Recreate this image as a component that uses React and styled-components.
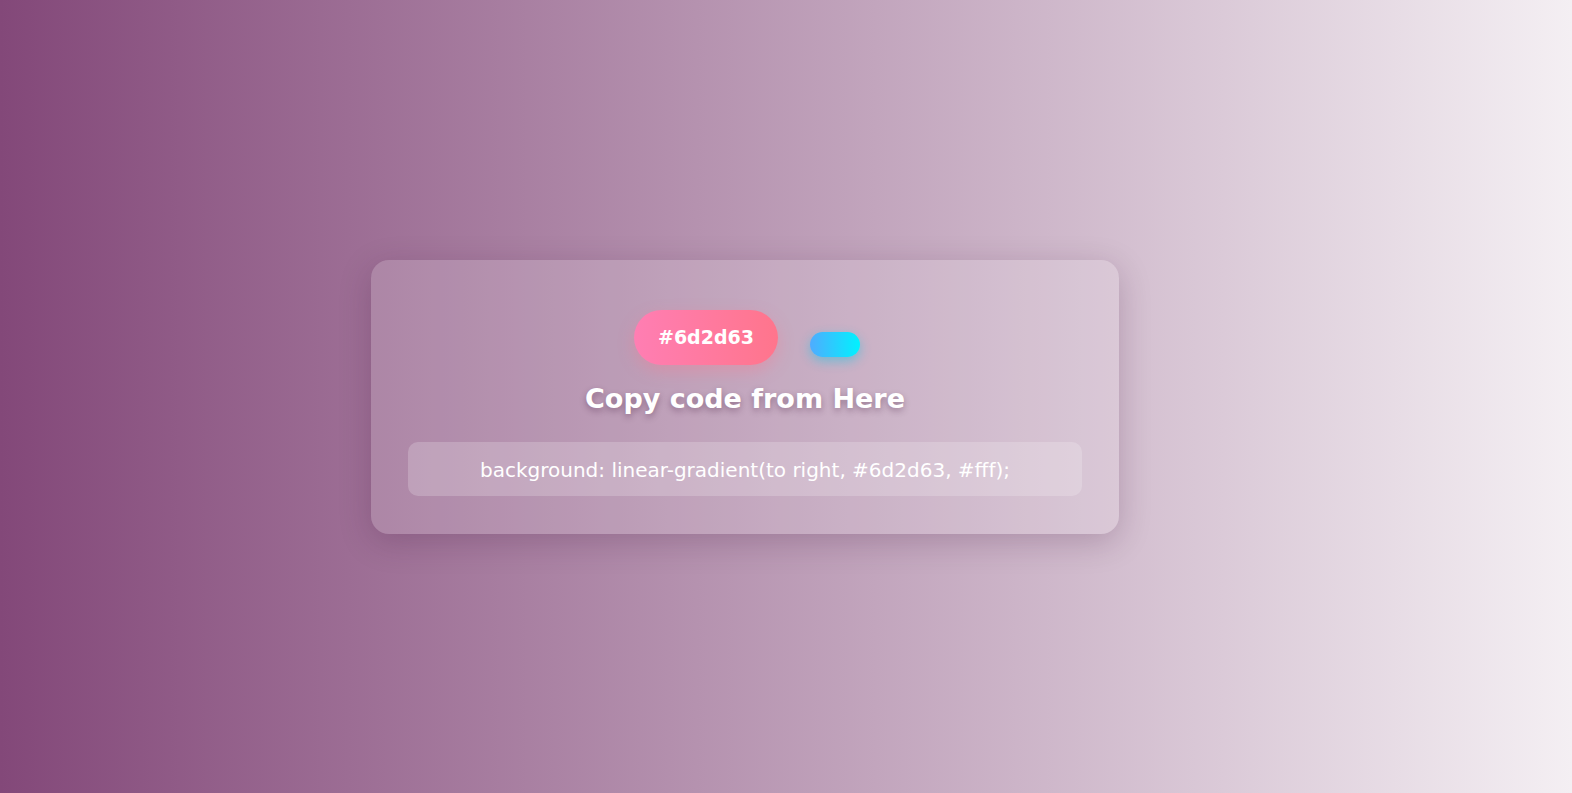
import styled, { createGlobalStyle } from 'styled-components'

const GlobalStyle = createGlobalStyle`
  html, body { margin: 0; padding: 0; }
  body {
    font-family: 'DejaVu Sans', 'Noto Sans', sans-serif;
    min-height: 793px;
    background: linear-gradient(to right, #834879, #f4eff3);
  }
`

const Page = styled.main`
  min-height: 793px;
  box-sizing: border-box;
  padding-right: 82px;
  display: flex;
  align-items: center;
  justify-content: center;
`

const Card = styled.section`
  width: 748px;
  box-sizing: border-box;
  padding: 50px 37px 38px;
  border-radius: 18px;
  background: rgba(255, 255, 255, 0.16);
  box-shadow: 0 8px 32px rgba(60, 20, 55, 0.22);
  display: flex;
  flex-direction: column;
  align-items: center;
`

const TopRow = styled.div`
  display: flex;
  align-items: flex-start;
  gap: 32px;
  margin-left: 4px;
`

const HexPill = styled.button`
  width: 144px;
  height: 55px;
  border: none;
  border-radius: 28px;
  background: linear-gradient(to right, #ff7eb3, #ff758c);
  box-shadow: 0 6px 16px rgba(255, 117, 140, 0.35);
  color: #fff;
  font-family: 'DejaVu Sans', sans-serif;
  font-size: 19px;
  font-weight: 700;
  cursor: pointer;
`

const Toggle = styled.div`
  width: 50px;
  height: 25px;
  margin-top: 22px;
  border-radius: 13px;
  background: linear-gradient(to right, #4facfe, #00f2fe);
  box-shadow: 0 4px 12px rgba(0, 200, 230, 0.45);
`

const Heading = styled.h2`
  margin: 14px 0 23px;
  font-family: 'DejaVu Sans', sans-serif;
  font-size: 27px;
  font-weight: 700;
  line-height: 40px;
  color: #fff;
  text-shadow: 0 3px 6px rgba(60, 20, 55, 0.35);
`

const CodeBox = styled.div`
  width: 100%;
  height: 54px;
  padding-top: 2px;
  box-sizing: border-box;
  border-radius: 10px;
  background: rgba(255, 255, 255, 0.2);
  display: flex;
  align-items: center;
  justify-content: center;
  color: #fff;
  font-family: 'DejaVu Sans', sans-serif;
  font-size: 20px;
`

export default function App() {
  return (
    <>
      <GlobalStyle />
      <Page>
        <Card>
          <TopRow>
            <HexPill>#6d2d63</HexPill>
            <Toggle />
          </TopRow>
          <Heading>Copy code from Here</Heading>
          <CodeBox>background: linear-gradient(to right, #6d2d63, #fff);</CodeBox>
        </Card>
      </Page>
    </>
  )
}
